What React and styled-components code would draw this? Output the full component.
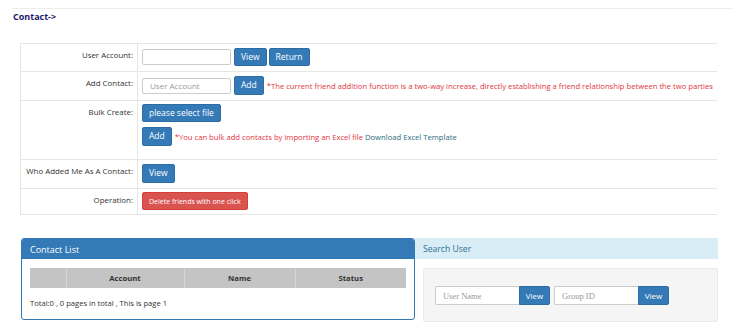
import styled, { createGlobalStyle } from 'styled-components';

const GlobalStyle = createGlobalStyle`
  html, body {
    margin: 0;
    padding: 0;
    background: #fff;
    font-family: "Open Sans", "Liberation Sans", sans-serif;
    font-size: 7.6px;
    color: #333;
  }
  * { box-sizing: border-box; }
`;

const formRows = [
  { label: 'User Account:', kind: 'account' },
  { label: 'Add Contact:', kind: 'add' },
  { label: 'Bulk Create:', kind: 'bulk' },
  { label: 'Who Added Me As A Contact:', kind: 'who' },
  { label: 'Operation:', kind: 'operation' },
];

export default function App() {
  const renderValue = (kind) => {
    switch (kind) {
      case 'account':
        return (
          <Inline>
            <TextInput width={89} />
            <Button>View</Button>
            <Button>Return</Button>
          </Inline>
        );
      case 'add':
        return (
          <Inline>
            <TextInput width={89} placeholder="User Account" />
            <Button tall>Add</Button>
            <Warning>
              *The current friend addition function is a two-way increase, directly establishing a friend
              relationship between the two parties
            </Warning>
          </Inline>
        );
      case 'bulk':
        return (
          <Stack>
            <div>
              <Button>please select file</Button>
            </div>
            <Inline>
              <Button tall>Add</Button>
              <Warning>
                *You can bulk add contacts by importing an Excel file <TemplateLink>Download Excel Template</TemplateLink>
              </Warning>
            </Inline>
          </Stack>
        );
      case 'who':
        return (
          <Inline>
            <Button tall>View</Button>
          </Inline>
        );
      default:
        return (
          <Inline>
            <DangerButton>Delete friends with one click</DangerButton>
          </Inline>
        );
    }
  };

  return (
    <>
      <GlobalStyle />
      <Page>
        <Heading>Contact-&gt;</Heading>
        <FormTable>
          {formRows.map((row) => (
            <FormRow key={row.kind} kind={row.kind}>
              <LabelCell>{row.label}</LabelCell>
              <ValueCell kind={row.kind}>{renderValue(row.kind)}</ValueCell>
            </FormRow>
          ))}
        </FormTable>
        <Panels>
          <ContactPanel>
            <PrimaryHeading>Contact List</PrimaryHeading>
            <PanelBody>
              <ListTable>
                <thead>
                  <tr>
                    <Th width={36}></Th>
                    <Th width={118}>Account</Th>
                    <Th width={111}>Name</Th>
                    <Th>Status</Th>
                  </tr>
                </thead>
              </ListTable>
              <Pager>Total:0 , 0 pages in total , This is page 1</Pager>
            </PanelBody>
          </ContactPanel>
          <SearchPanel>
            <InfoHeading>Search User</InfoHeading>
            <SearchBody>
              <Well>
                <InputGroup>
                  <GroupInput placeholder="User Name" />
                  <GroupButton>View</GroupButton>
                </InputGroup>
                <InputGroup>
                  <GroupInput placeholder="Group ID" />
                  <GroupButton>View</GroupButton>
                </InputGroup>
              </Well>
            </SearchBody>
          </SearchPanel>
        </Panels>
      </Page>
    </>
  );
}

const Page = styled.div`
  padding-top: 8px;
  width: 733px;
`;

const Heading = styled.div`
  margin-left: 12px;
  border-top: 1px solid #eee;
  padding: 1px 0 0 1px;
  height: 35px;
  font-size: 9px;
  font-weight: 700;
  color: #1d1a6b;
`;

const FormTable = styled.div`
  margin-left: 20px;
  width: 697px;
  border-top: 1px solid #e6e6e6;
  border-left: 1px solid #e6e6e6;
`;

const rowHeights = { account: 28, add: 29, bulk: 59, who: 29, operation: 26 };

const FormRow = styled.div`
  display: grid;
  grid-template-columns: 117px 1fr;
  height: ${(p) => rowHeights[p.kind]}px;
  border-bottom: 1px solid #e6e6e6;
`;

const LabelCell = styled.div`
  text-align: right;
  padding: 4px 4px 0 0;
  border-right: 1px solid #e6e6e6;
  line-height: 14px;
  font-size: 7.9px;
  white-space: nowrap;
`;

const ValueCell = styled.div`
  padding: ${(p) => (p.kind === 'bulk' || p.kind === 'operation' ? 3 : 4)}px 0 0 4px;
`;

const Inline = styled.div`
  display: flex;
  align-items: center;
  gap: 2px;
  white-space: nowrap;
`;

const Stack = styled.div`
  display: flex;
  flex-direction: column;
  gap: 5px;
`;

const TextInput = styled.input`
  width: ${(p) => p.width}px;
  height: 16px;
  margin-right: 1px;
  border: 1px solid #ccc;
  border-radius: 2px;
  padding: 0 7px;
  font: inherit;
  font-size: 8px;
  color: #555;
  outline: none;
  &::placeholder { color: #999; }
`;

const Button = styled.button`
  height: ${(p) => (p.tall ? 19 : 18)}px;
  padding: 0 6px;
  border: 1px solid #2e6da4;
  border-radius: 2px;
  background: #337ab7;
  color: #fff;
  font-family: inherit;
  font-size: 8.5px;
  line-height: 1;
  cursor: pointer;
`;

const DangerButton = styled(Button)`
  background: #d9534f;
  border-color: #d43f3a;
  font-size: 7px;
  padding: 0 6px;
`;

const Warning = styled.span`
  margin-left: 1px;
  font-size: 7.65px;
  color: #e0353e;
`;

const TemplateLink = styled.a`
  color: #2a6b7c;
  text-decoration: none;
`;

const Panels = styled.div`
  display: flex;
  margin: 23px 0 0 21px;
  width: 697px;
`;

const ContactPanel = styled.div`
  width: 394px;
  height: 82px;
  border: 1px solid #337ab7;
  border-radius: 3px;
  overflow: hidden;
`;

const PrimaryHeading = styled.div`
  height: 20px;
  padding: 0 8px;
  display: flex;
  align-items: center;
  background: #337ab7;
  color: #fff;
  font-size: 9px;
`;

const PanelBody = styled.div`
  padding: 9px 8px 0;
`;

const ListTable = styled.table`
  width: 100%;
  border-collapse: collapse;
`;

const Th = styled.th`
  width: ${(p) => (p.width ? `${p.width}px` : 'auto')};
  height: 20px;
  padding: 0;
  background: #c4c4c4;
  border-left: 1px solid #d6d6d6;
  color: #333;
  font-weight: 700;
  font-size: 7.7px;
  &:first-child { border-left: none; }
`;

const Pager = styled.div`
  margin-top: 10px;
  font-size: 7.6px;
`;

const SearchPanel = styled.div`
  flex: 1;
`;

const InfoHeading = styled.div`
  height: 21px;
  padding: 0 8px;
  display: flex;
  align-items: center;
  background: #d9edf7;
  color: #31708f;
  font-size: 8.6px;
`;

const SearchBody = styled.div`
  padding: 9px 0 0 8px;
`;

const Well = styled.div`
  display: flex;
  gap: 4px;
  height: 54px;
  padding: 17px 11px 0;
  background: #f5f5f5;
  border: 1px solid #e9e9e9;
  border-radius: 2px;
`;

const InputGroup = styled.div`
  display: flex;
  height: 19px;
`;

const GroupInput = styled.input`
  width: 84px;
  height: 19px;
  border: 1px solid #ccc;
  border-right: none;
  border-radius: 2px 0 0 2px;
  padding: 0 7px;
  font-family: "Liberation Serif", serif;
  font-size: 8.5px;
  outline: none;
  &::placeholder { color: #999; }
`;

const GroupButton = styled.button`
  width: 31px;
  height: 19px;
  padding: 0;
  border: 1px solid #2e6da4;
  border-radius: 0 2px 2px 0;
  background: #337ab7;
  color: #fff;
  font-family: inherit;
  font-size: 8px;
`;
